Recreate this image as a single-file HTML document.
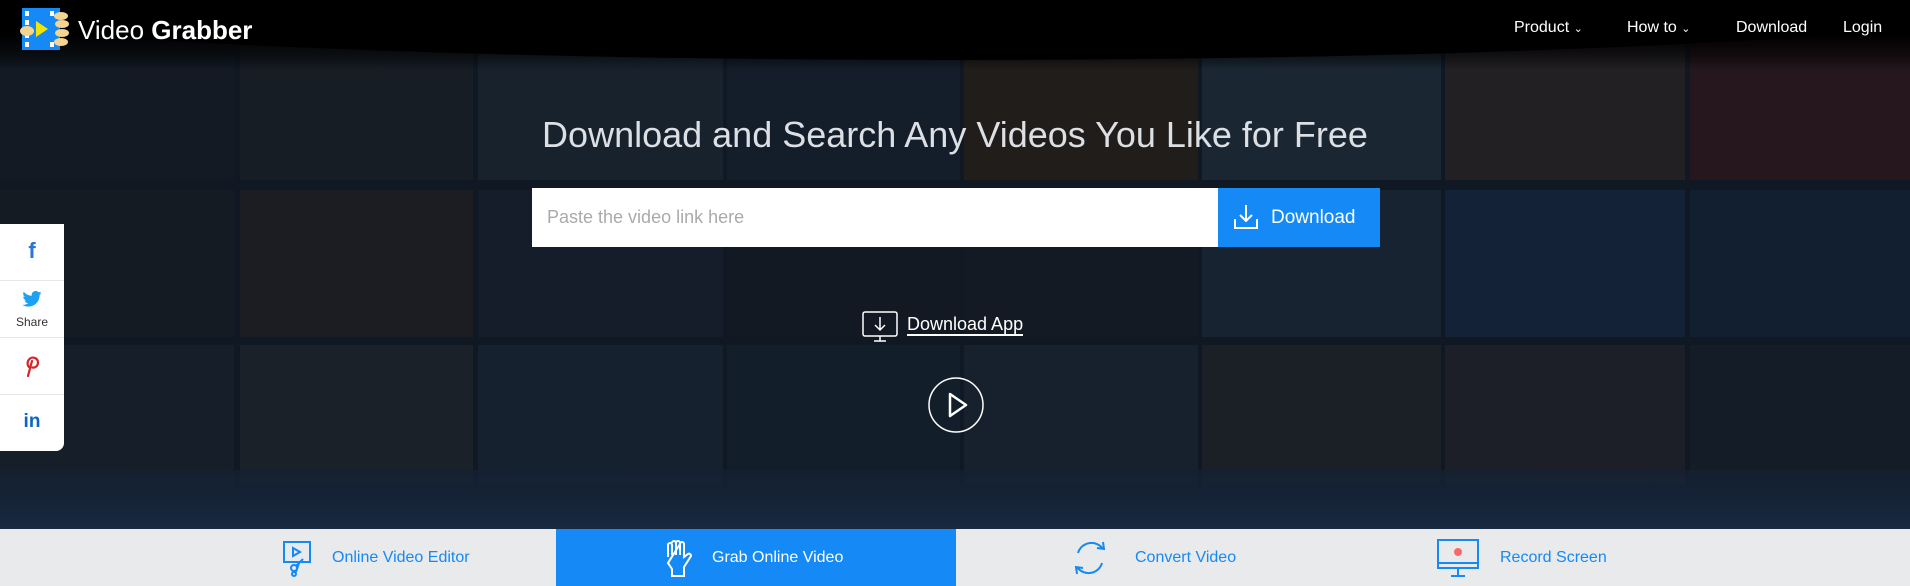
<!DOCTYPE html>
<html><head><meta charset="utf-8"><style>
*{margin:0;padding:0;box-sizing:border-box}
body{width:1910px;height:586px;overflow:hidden;font-family:"Liberation Sans",sans-serif;background:#121b27;position:relative}
.hero{position:absolute;left:0;top:0;width:1910px;height:529px;background:#131b26;overflow:hidden}
.t{position:absolute}
.top{position:absolute;left:0;top:0;width:1910px;height:70px;background:linear-gradient(#000 0,#000 50%,rgba(0,0,0,.5) 80%,rgba(0,0,0,0));}
.arc{position:absolute;left:-150px;top:-70px;width:2210px;height:130px;border-radius:50%;background:#000}
.shade{position:absolute;left:0;top:0;width:1910px;height:529px;background:rgba(12,20,32,.35)}
.floor{position:absolute;left:0;top:470px;width:1910px;height:59px;background:linear-gradient(rgba(20,32,50,.7),rgba(24,42,66,.95))}
.logo{position:absolute;left:20px;top:8px}
.brand{position:absolute;left:78px;top:15px;color:#fff;font-size:26px}
.nav{position:absolute;top:19px;color:#fff;font-size:16px}
h1{position:absolute;left:0;width:1910px;top:114px;text-align:center;color:#dcdfe3;font-weight:normal;font-size:36px}
.inp{position:absolute;left:532px;top:188px;width:686px;height:59px;background:#fff;color:#aaa;font-size:18px;line-height:59px;padding-left:15px}
.btn{position:absolute;left:1218px;top:188px;width:162px;height:59px;background:#1589f5;color:#fff;font-size:19px;line-height:59px;padding-left:53px}
.app{position:absolute;left:907px;top:314px;color:#fff;font-size:18px;border-bottom:2px solid #fff;line-height:20px}
.side{position:absolute;left:0;top:224px;width:64px;height:227px;background:#fff;border-radius:0 0 8px 0}
.side div{height:57px;border-bottom:1px solid #e6e6e6;text-align:center;position:relative}
.bar{position:absolute;left:0;top:529px;width:1910px;height:57px;background:#e9eaec}
.tab{position:absolute;top:0;height:57px;line-height:57px;font-size:16px;color:#1589f5}
.act{position:absolute;left:556px;top:529px;width:400px;height:57px;background:#1589f5}
</style></head><body>
<div class="hero">
<div class="t" style="left:0;top:40px;width:234px;height:140px;background:#171e27"></div>
<div class="t" style="left:240px;top:40px;width:233px;height:140px;background:#1e2228"></div>
<div class="t" style="left:478px;top:40px;width:245px;height:140px;background:#202a34"></div>
<div class="t" style="left:727px;top:40px;width:233px;height:140px;background:#1a2330"></div>
<div class="t" style="left:964px;top:40px;width:234px;height:140px;background:#2b2219"></div>
<div class="t" style="left:1202px;top:40px;width:239px;height:140px;background:#22313d"></div>
<div class="t" style="left:1445px;top:40px;width:240px;height:140px;background:#302727"></div>
<div class="t" style="left:1690px;top:40px;width:220px;height:140px;background:#33191c"></div>
<div class="t" style="left:0;top:190px;width:234px;height:147px;background:#1b2025"></div>
<div class="t" style="left:240px;top:190px;width:233px;height:147px;background:#252325"></div>
<div class="t" style="left:478px;top:190px;width:245px;height:147px;background:#1a232e"></div>
<div class="t" style="left:727px;top:190px;width:233px;height:147px;background:#161d26"></div>
<div class="t" style="left:964px;top:190px;width:234px;height:147px;background:#181e26"></div>
<div class="t" style="left:1202px;top:190px;width:239px;height:147px;background:#202c3c"></div>
<div class="t" style="left:1445px;top:190px;width:240px;height:147px;background:#172a44"></div>
<div class="t" style="left:1690px;top:190px;width:220px;height:147px;background:#16263b"></div>
<div class="t" style="left:0;top:345px;width:234px;height:140px;background:#1b242e"></div>
<div class="t" style="left:240px;top:345px;width:233px;height:140px;background:#24292e"></div>
<div class="t" style="left:478px;top:345px;width:245px;height:140px;background:#1b2836"></div>
<div class="t" style="left:727px;top:345px;width:233px;height:140px;background:#182432"></div>
<div class="t" style="left:964px;top:345px;width:234px;height:140px;background:#1e2935"></div>
<div class="t" style="left:1202px;top:345px;width:239px;height:140px;background:#24272c"></div>
<div class="t" style="left:1445px;top:345px;width:240px;height:140px;background:#26252c"></div>
<div class="t" style="left:1690px;top:345px;width:220px;height:140px;background:#1a212b"></div>
<div class="shade"></div>
<div class="floor"></div>
<div class="top"></div>
<div class="arc"></div>
</div>
<svg class="logo" width="50" height="42" viewBox="0 0 50 42">
<rect x="2" y="0" width="38" height="42" fill="#1589f5"/>
<g fill="#fff"><rect x="5" y="3" width="4" height="5"/><rect x="5" y="12" width="4" height="5"/><rect x="5" y="25" width="4" height="5"/><rect x="5" y="34" width="4" height="5"/><rect x="30" y="3" width="4" height="5"/><rect x="30" y="34" width="4" height="5"/></g>
<path d="M16 13 L28 21 L16 29Z" fill="#f2e600"/>
<ellipse cx="7" cy="23" rx="7" ry="5" fill="#f5d491"/>
<ellipse cx="41" cy="8" rx="7" ry="4" fill="#f5d491"/><ellipse cx="42" cy="16" rx="7" ry="4" fill="#f5d491"/><ellipse cx="42" cy="25" rx="7" ry="4" fill="#f5d491"/><ellipse cx="41" cy="34" rx="7" ry="4" fill="#f5d491"/>
</svg>
<div class="brand">Video <b>Grabber</b></div>
<div class="nav" style="left:1514px">Product <span style="font-size:11px">&#8964;</span></div>
<div class="nav" style="left:1627px">How to <span style="font-size:11px">&#8964;</span></div>
<div class="nav" style="left:1736px">Download</div>
<div class="nav" style="left:1843px">Login</div>
<h1>Download and Search Any Videos You Like for Free</h1>
<div class="inp">Paste the video link here</div>
<div class="btn">Download</div>
<svg style="position:absolute;left:1233px;top:204px" width="26" height="26" viewBox="0 0 26 26" fill="none" stroke="#fff" stroke-width="2"><path d="M13 1V17M7 11L13 17L19 11M2 15V24H24V15"/></svg>
<svg style="position:absolute;left:862px;top:311px" width="36" height="32" viewBox="0 0 36 32" fill="none" stroke="#fff" stroke-width="1.5"><rect x="1" y="1" width="34" height="24" rx="2"/><path d="M18 6V19M13 14L18 19L23 14M12 30H24M18 25V30"/></svg>
<div class="app">Download App</div>
<svg style="position:absolute;left:928px;top:377px" width="56" height="56" viewBox="0 0 56 56" fill="none" stroke="#fff" stroke-width="1.5"><circle cx="28" cy="28" r="27"/><path d="M22 17L38 28L22 39Z" stroke-width="2.5" stroke-linejoin="round"/></svg>
<div class="side">
<div><span style="position:absolute;left:0;width:64px;top:14px;color:#2b74d8;font-weight:bold;font-size:22px">f</span></div>
<div><svg style="position:absolute;left:22px;top:10px" width="20" height="16" viewBox="0 0 24 20"><path fill="#1da1f2" d="M24 2.4a9.8 9.8 0 0 1-2.8.8A4.9 4.9 0 0 0 23.3.4a9.9 9.9 0 0 1-3.1 1.2A4.9 4.9 0 0 0 11.8 6 14 14 0 0 1 1.7.9a4.9 4.9 0 0 0 1.5 6.6A4.9 4.9 0 0 1 1 6.9a4.9 4.9 0 0 0 3.9 4.8 4.9 4.9 0 0 1-2.2.1 4.9 4.9 0 0 0 4.6 3.4A9.9 9.9 0 0 1 0 17.3 14 14 0 0 0 7.5 19.5c9.1 0 14-7.5 14-14v-.6A10 10 0 0 0 24 2.4z"/></svg><span style="position:absolute;left:0;width:64px;top:34px;font-size:12px;color:#333">Share</span></div>
<div><svg style="position:absolute;left:24px;top:17px" width="16" height="22" viewBox="0 0 16 22" fill="none" stroke="#d8232a" stroke-width="2.2" stroke-linecap="round"><path d="M5 12C3 10 3 6 6 3.5C9 1.5 14 3 14 7.5C14 11 11 13 8.5 12.5M8 6L4 21"/></svg></div>
<div style="border:none"><span style="position:absolute;left:0;width:64px;top:16px;color:#0a66c2;font-weight:bold;font-size:19px">in</span></div>
</div>
<div class="bar"></div>
<div class="act"></div>
<svg style="position:absolute;left:283px;top:541px" width="30" height="36" viewBox="0 0 30 36" fill="none" stroke="#1589f5" stroke-width="2"><rect x="1" y="1" width="26" height="20"/><path d="M10 7L17 11L10 15Z"/><circle cx="11" cy="27" r="3"/><circle cx="11" cy="33" r="2"/><path d="M13 25L20 18M13 31L16 22"/></svg>
<div class="tab" style="left:332px;top:529px">Online Video Editor</div>
<svg style="position:absolute;left:664px;top:539px" width="28" height="38" viewBox="0 0 28 38" fill="none" stroke="#fff" stroke-width="2"><path d="M4 18V6a2 2 0 0 1 4 0V16M8 4a2 2 0 0 1 4 0V16M12 4a2 2 0 0 1 4 0V16M16 5a2 2 0 0 1 4 0V18L24 15a2 2 0 0 1 3 2L20 28V37H8V30L4 24Z"/></svg>
<div class="tab" style="left:712px;top:529px;color:#fff">Grab Online Video</div>
<svg style="position:absolute;left:1070px;top:539px" width="40" height="38" viewBox="0 0 40 38" fill="none" stroke="#1589f5" stroke-width="2"><path d="M8 14A14 14 0 0 1 33 10M32 24A14 14 0 0 1 7 28"/><path d="M27 9L34 10L33 3M13 29L6 28L7 35"/></svg>
<div class="tab" style="left:1135px;top:529px">Convert Video</div>
<svg style="position:absolute;left:1437px;top:539px" width="42" height="40" viewBox="0 0 42 40" fill="none" stroke="#1589f5" stroke-width="2"><rect x="1" y="1" width="40" height="28"/><path d="M1 24H41M21 29V36M14 37H28"/><circle cx="21" cy="13" r="4" fill="#f86a6a" stroke="none"/></svg>
<div class="tab" style="left:1500px;top:529px">Record Screen</div>
</body></html>
